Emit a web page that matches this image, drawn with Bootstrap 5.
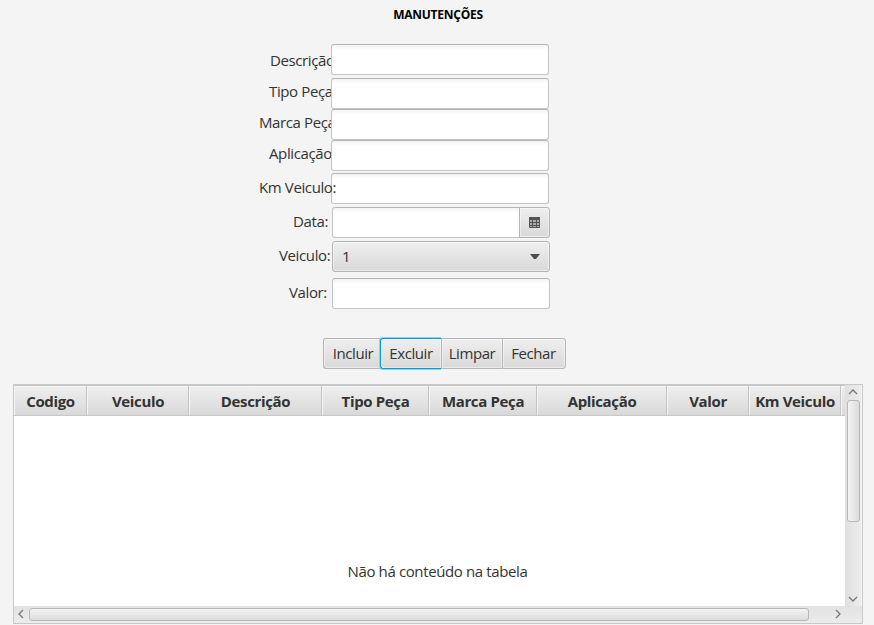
<!DOCTYPE html>
<html lang="pt-BR">
<head>
<meta charset="utf-8">
<meta name="viewport" content="width=device-width, initial-scale=1">
<title>Manutenções</title>
<link href="https://cdn.jsdelivr.net/npm/bootstrap@5.3.0/dist/css/bootstrap.min.css" rel="stylesheet">
<style>
body{background:#f4f4f4;color:#333;font:15px/20px "Open Sans","Noto Sans",sans-serif;width:874px;height:625px;letter-spacing:-.38px}
h1{font-size:12px;line-height:16px;color:#000;letter-spacing:-.25px;margin-left:2px;padding-top:7px}
.fields{width:291px;margin-left:259px;margin-top:21px}
.line{height:31px}
.line label{width:72px;flex:none;white-space:nowrap;color:#333;line-height:20px}
.fx{height:31px;min-height:0;padding:0 10px;border:1px solid #c4c4c4;border-top-color:#b5b5b5;border-radius:3px;background:linear-gradient(#f3f3f3,#fff 5px);position:relative;width:218px;font:inherit}
.fx:focus{box-shadow:none}
.g1{margin-top:3px}.g2{margin-top:2px}.g6{margin-top:6px}
.line .up3{padding-bottom:6px}.line .up2{padding-bottom:4px}
.late label{width:73px;padding-bottom:4px}
.ind1{padding-left:10px}.ind2{padding-left:11px}.ind3{padding-left:34px}.ind4{padding-left:20px}.ind5{padding-left:30px}
.front{z-index:2;position:relative}
.grey{background:linear-gradient(#efefef,#d9d9d9);border:1px solid #b5b5b5;box-shadow:inset 0 0 0 1px rgba(255,255,255,.45)}
.datebox .fx{width:188px;border-radius:3px 0 0 3px}
.calbtn{width:31px;height:31px;margin-left:-1px;position:relative;border-radius:0 3px 3px 0;padding:0}
.combo{width:218px;height:31px;border-radius:3px;padding:0 9px 0 9px}
.combo span{padding-bottom:2px}
.actions{margin:29px 0 0 323px;height:31px}
.act{height:31px;padding:0 0 2px;border-radius:0;font:inherit;letter-spacing:-.42px;color:#333}
.act:first-child{width:57px;border-radius:3px 0 0 3px;border-right:0;padding-left:2px}
.act.sel{width:61px;border:1px solid #039ed3;border-right:0;border-radius:3px 0 0 3px;box-shadow:0 0 0 1px #8fd3eb,inset 0 0 0 1px rgba(255,255,255,.4);clip-path:inset(-2px 0 -2px -2px)}
.act.third{width:61px;border-right:0}
.act.fourth{width:64px;border-radius:0 3px 3px 0;padding-right:1px}
.grid{margin:15px 0 0 13px;width:850px;height:240px;border:1px solid #c8c8c8;background:#fff}
.main{width:831px;height:221px}
.heads{height:31px;border-top:1px solid #c8c8c8;border-bottom:1px solid #c8c8c8;background:linear-gradient(#efefef,#d9d9d9)}
.hd{flex:none;height:29px;border-right:1px solid #c4c4c4;box-shadow:inset 1px 1px 0 #f5f5f5;font-weight:700;color:#333;white-space:nowrap;letter-spacing:-.35px;padding:1px 0 0 1px}
.w1{width:73px}.w2{width:102px}.w3{width:133px}.w4{width:107px}.w5{width:108px}.w6{width:130px}.w7{width:82px}.w8{width:92px}.w9{width:4px;border-right:0}
.empty{padding-top:145px;padding-left:16px}
.vbar{width:17px;height:221px;background:linear-gradient(90deg,#e0e0e0,#ececec);border-right:1px solid #f7f7f7}
.vthumb{width:13px;height:122px;margin-top:5px;border:1px solid #b8b8b8;border-radius:3px;background:linear-gradient(90deg,#f3f3f3,#dcdcdc)}
.hbar{height:17px;width:848px;padding-bottom:1px;background:linear-gradient(#e2e2e2,#ececec)}
.hthumb{width:780px;height:13px;margin-left:5px;border:1px solid #b8b8b8;border-radius:3px;background:linear-gradient(#f3f3f3,#dcdcdc)}
.toright{margin-left:26px}
svg{display:block;flex:none}
</style>
</head>
<body class="overflow-hidden">
<h1 class="text-center fw-bold mb-0">MANUTENÇÕES</h1>
<form class="fields">
<div class="line d-flex align-items-center"><label for="a" class="ind2">Descrição:</label><input id="a" class="form-control fx"></div>
<div class="line d-flex align-items-center g1"><label for="b" class="ind1 up3">Tipo Peça:</label><input id="b" class="form-control fx"></div>
<div class="line d-flex align-items-center"><label for="c" class="up3">Marca Peça:</label><input id="c" class="form-control fx"></div>
<div class="line d-flex align-items-center"><label for="d" class="ind1 up3">Aplicação:</label><input id="d" class="form-control fx"></div>
<div class="line d-flex align-items-center g2"><label for="e" class="front up2">Km Veiculo:</label><input id="e" class="form-control fx"></div>
<div class="line late d-flex align-items-center g1 datebox"><label for="f" class="ind3">Data:</label><input id="f" class="form-control fx"><button type="button" class="calbtn grey d-flex align-items-center justify-content-center" aria-label="Calendário"><svg width="11" height="11"><path fill="#aaa" d="M0 0h11v11H0z"/><path fill="#555" d="M0 0h11v3H0z"/><path fill="none" stroke="#555" d="M.5 3v7.500h10V3M3.500 3v7M7.500 3v7M1 5.500h9M1 8.500h9"/></svg></button></div>
<div class="line late d-flex align-items-center g1"><label class="ind4">Veiculo:</label><div class="combo grey d-flex align-items-center justify-content-between"><span>1</span><svg width="10" height="5"><path fill="#4d4d4d" d="M0 0h10L6 5H4z"/></svg></div></div>
<div class="line late d-flex align-items-center g6"><label for="h" class="ind5">Valor:</label><input id="h" class="form-control fx"></div>
</form>
<div class="actions d-flex">
<button class="act grey">Incluir</button><button class="act grey sel">Excluir</button><button class="act grey third">Limpar</button><button class="act grey fourth">Fechar</button>
</div>
<section class="grid">
<div class="d-flex">
<div class="main">
<div class="heads d-flex text-center">
<div class="hd w1 d-flex align-items-center justify-content-center">Codigo</div>
<div class="hd w2 d-flex align-items-center justify-content-center">Veiculo</div>
<div class="hd w3 d-flex align-items-center justify-content-center">Descrição</div>
<div class="hd w4 d-flex align-items-center justify-content-center">Tipo Peça</div>
<div class="hd w5 d-flex align-items-center justify-content-center">Marca Peça</div>
<div class="hd w6 d-flex align-items-center justify-content-center">Aplicação</div>
<div class="hd w7 d-flex align-items-center justify-content-center">Valor</div>
<div class="hd w8 d-flex align-items-center justify-content-center">Km Veiculo</div>
<div class="hd w9"></div>
</div>
<div class="empty text-center">Não há conteúdo na tabela</div>
</div>
<div class="vbar d-flex flex-column align-items-center justify-content-between pt-1 pb-1">
<div><svg class="mx-auto" width="10" height="6"><path d="M1 5l4-4 4 4" fill="none" stroke="#777" stroke-width="1.300"/></svg><div class="vthumb"></div></div>
<svg width="10" height="6"><path d="M1 1l4 4 4-4" fill="none" stroke="#777" stroke-width="1.300"/></svg>
</div>
</div>
<div class="hbar d-flex align-items-center">
<svg class="ms-1" width="6" height="10"><path d="M5 1L1 5l4 4" fill="none" stroke="#777" stroke-width="1.300"/></svg>
<div class="hthumb"></div>
<svg class="toright" width="6" height="10"><path d="M1 1l4 4-4 4" fill="none" stroke="#777" stroke-width="1.300"/></svg>
</div>
</section>
<script src="https://cdn.jsdelivr.net/npm/bootstrap@5.3.0/dist/js/bootstrap.bundle.min.js"></script>
</body>
</html>
